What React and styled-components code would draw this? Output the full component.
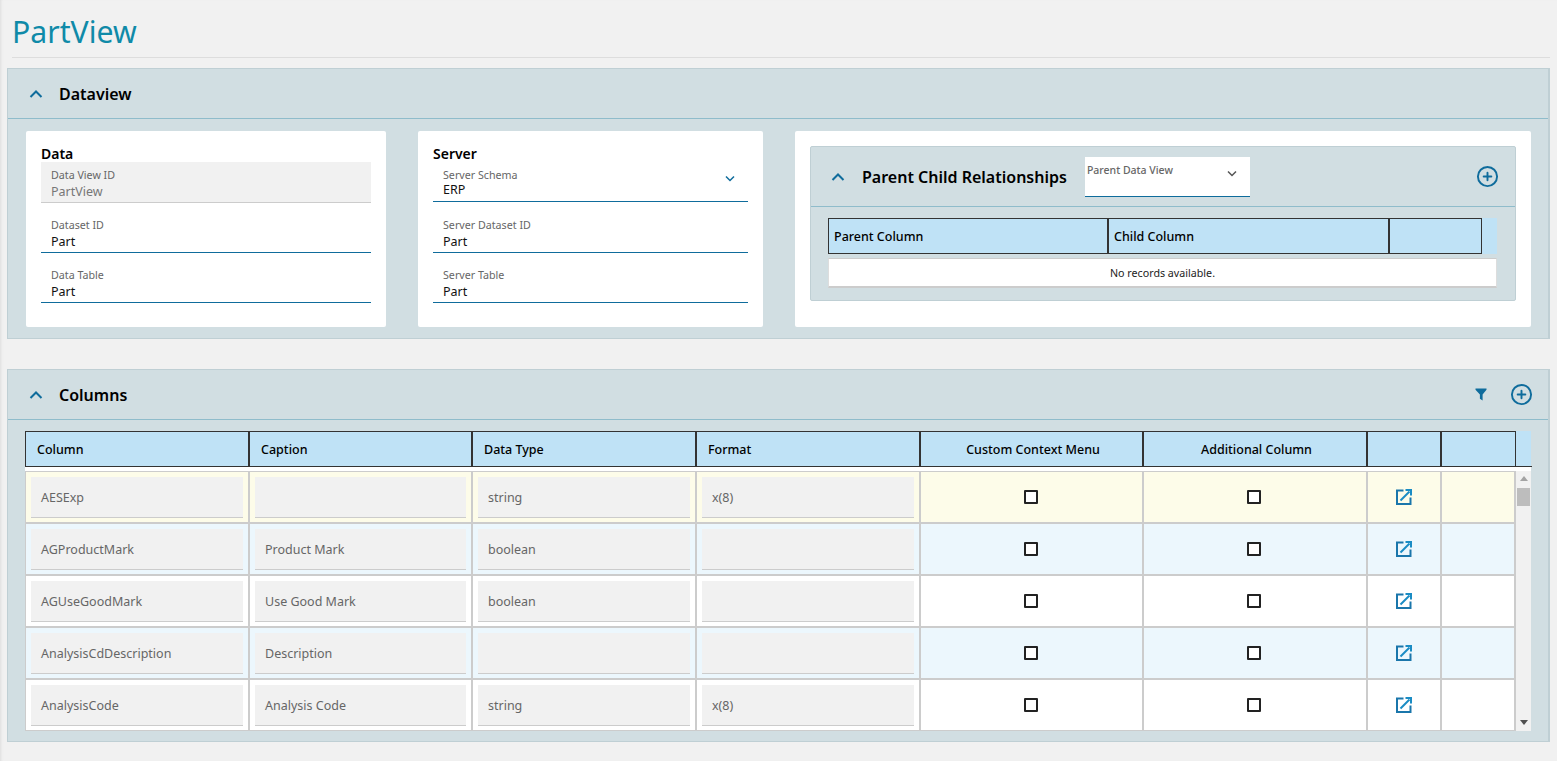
import React from 'react';
import styled, { createGlobalStyle } from 'styled-components';
import { CirclePlus } from 'lucide-react';

const GlobalStyle = createGlobalStyle`
  html, body {
    margin: 0;
    padding: 0;
    background: #f1f1f1;
    font-family: "Noto Sans", "Open Sans", sans-serif;
    color: #000;
  }
  * { box-sizing: border-box; }
`;

const headWidths = '223px 223px 224px 224px 223px 224px 74px 76px';
const rowWidths = '224px 223px 224px 224px 223px 224px 74px 74px';

const columnRows = [
  { column: 'AESExp', caption: '', type: 'string', format: 'x(8)', tone: 'selected' },
  { column: 'AGProductMark', caption: 'Product Mark', type: 'boolean', format: '', tone: 'alt' },
  { column: 'AGUseGoodMark', caption: 'Use Good Mark', type: 'boolean', format: '', tone: 'plain' },
  { column: 'AnalysisCdDescription', caption: 'Description', type: '', format: '', tone: 'alt' },
  { column: 'AnalysisCode', caption: 'Analysis Code', type: 'string', format: 'x(8)', tone: 'plain' },
];

const rowColors = { selected: '#fdfce9', alt: '#ecf7fd', plain: '#fff' };

const ChevronUp = () => (
  <svg width="14" height="10" viewBox="0 0 14 10" fill="none">
    <path d="M1.5 8 L7 2.5 L12.5 8" stroke="#0f6c9c" strokeWidth="2" />
  </svg>
);

const ChevronDown = ({ color }) => (
  <svg width="10" height="7" viewBox="0 0 10 7" fill="none">
    <path d="M1 1.5 L5 5.5 L9 1.5" stroke={color} strokeWidth="1.5" />
  </svg>
);

const FilterIcon = () => (
  <svg width="12" height="13" viewBox="0 0 12 13">
    <path d="M0.5 0.5 H11.5 V1.8 L7.6 6.5 V12.5 L4.9 10.8 V6.5 L0.5 1.8 Z" fill="#0f6c9c" />
  </svg>
);

const OpenIcon = () => (
  <svg width="16" height="16" viewBox="0 0 16 16" fill="none">
    <path d="M7.5 1.5 H1 V15 H14.5 V8.5" stroke="#1a76ab" strokeWidth="2" />
    <path d="M4.5 11.5 L13.5 2.5" stroke="#1a8cc4" strokeWidth="2" />
    <path d="M9.5 1 H15 V6.5" stroke="#1a8cc4" strokeWidth="2" />
  </svg>
);

const Page = styled.div`
  height: 761px;
  padding: 0 7px;
  overflow: hidden;
  box-shadow: inset 3px 0 3px -2px #ddd;
`;

const TitleBar = styled.div`
  margin: 0 0 10px 5px;
  height: 58px;
  padding-top: 11px;
  border-bottom: 1px solid #ddd;
`;

const Title = styled.h1`
  margin: 0;
  font-size: 30.2px;
  line-height: 42px;
  font-weight: 400;
  color: #0f8aa8;
`;

const Panel = styled.section`
  background: #d1dee2;
  border: 1px solid #bfcfd4;
  border-right-width: 2px;
  margin-bottom: ${(p) => p.$gap || 0}px;
`;

const PanelHeader = styled.header`
  display: flex;
  align-items: center;
  height: ${(p) => p.$height || 50}px;
  padding: 0 ${(p) => p.$padRight || 15}px 0 ${(p) => p.$padLeft || 21}px;
  border-bottom: 1px solid #8fbccb;
`;

const PanelTitle = styled.h2`
  margin: 0 0 0 ${(p) => p.$gap || 16}px;
  font-size: 16px;
  line-height: 20px;
  font-weight: 600;
`;

const DataviewBody = styled.div`
  display: grid;
  grid-template-columns: 360px 345px 736px;
  gap: 32px;
  padding: 12px 18px 11px;
`;

const Card = styled.div`
  background: #fff;
  border-radius: 2px;
  height: 196px;
  padding: ${(p) => (p.$wide ? '15px 15px' : '14px 15px')};
`;

const CardTitle = styled.h3`
  margin: 0;
  font-size: 14px;
  line-height: 17px;
  font-weight: 600;
`;

const FieldStack = styled.div`
  display: flex;
  flex-direction: column;
  gap: 9px;
`;

const Field = styled.div`
  position: relative;
  height: ${(p) => (p.$select ? 40 : 41)}px;
  margin-bottom: ${(p) => (p.$select ? 1 : 0)}px;
  padding: 6px 10px 0;
  background: ${(p) => (p.$readOnly ? '#f1f1f1' : '#fff')};
  border-bottom: ${(p) => (p.$readOnly ? '1px solid #ccc' : '1px solid #0f6c9c')};
`;

const FieldLabel = styled.div`
  font-size: 10.7px;
  line-height: 14px;
  color: #666;
`;

const FieldValue = styled.div`
  font-size: 12.5px;
  line-height: 17px;
  margin-top: ${(p) => (p.$tight ? -1 : 1)}px;
  color: ${(p) => (p.$readOnly ? '#777' : '#111')};
`;

const SelectArrow = styled.span`
  position: absolute;
  right: 13px;
  top: 13px;
  line-height: 0;
`;

const ParentPanel = styled.div`
  background: #d1dee2;
  border: 1px solid #bfcfd4;
  border-radius: 2px;
  height: 155px;
`;

const ParentSelect = styled.div`
  position: relative;
  width: 165px;
  height: 40px;
  margin-left: 18px;
  padding: 6px 2px;
  background: #fff;
  border-bottom: 1px solid #0f6c9c;
  font-size: 10.5px;
  line-height: 14px;
  font-weight: 500;
  color: #666;
`;

const AddButton = styled.span`
  margin-left: ${(p) => (p.$inline ? 0 : 'auto')};
  line-height: 0;
  color: #0f6c9c;
`;

const FilterButton = styled.span`
  margin-left: auto;
  margin-right: 23px;
  line-height: 0;
`;

const ParentBody = styled.div`
  padding: 11px 18px 0 17px;
`;

const ParentHead = styled.div`
  display: grid;
  grid-template-columns: 279px 281px 94px 16px;
  height: 36px;
  background: #bfe2f6;
`;

const ParentHeadCell = styled.div`
  display: flex;
  align-items: center;
  padding-left: 5px;
  font-size: 12.5px;
  font-weight: 500;
  border-top: 1px solid #333;
  border-bottom: 1px solid #333;
  border-left: ${(p) => (p.$first ? 1 : 2)}px solid #333;
  border-right: ${(p) => (p.$last ? 1 : 0)}px solid #333;
`;

const NoRecords = styled.div`
  margin-top: 4px;
  height: 30px;
  background: #fff;
  border: 1px solid #ddd;
  border-top-color: #ccc;
  border-bottom: 2px solid #ccc;
  font-size: 10.7px;
  line-height: 28px;
  text-align: center;
  color: #222;
`;

const ColumnsBody = styled.div`
  padding: 11px 17px 10px;
`;

const TableHead = styled.div`
  display: grid;
  grid-template-columns: ${headWidths} 16px;
  height: 36px;
  background: #bfe2f6;
`;

const HeadCell = styled.div`
  display: flex;
  align-items: center;
  justify-content: ${(p) => (p.$center ? 'center' : 'flex-start')};
  padding-left: ${(p) => (p.$center ? 3 : 11)}px;
  font-size: 12.5px;
  font-weight: 500;
  border-top: 1px solid #333;
  border-bottom: 1px solid #333;
  border-left: ${(p) => (p.$first ? 1 : 2)}px solid #333;
  border-right: ${(p) => (p.$last ? 1 : 0)}px solid #333;
`;

const HeadGutter = styled.div`
  border-bottom: 1px solid #333;
`;

const TableViewport = styled.div`
  display: grid;
  grid-template-columns: 1fr 16px;
  height: 264px;
  padding-top: 4px;
  background: #fff;
  overflow: hidden;
`;

const Rows = styled.div`
  border-left: 1px solid #ccc;
`;

const Row = styled.div`
  display: grid;
  grid-template-columns: ${rowWidths};
  height: 52px;
  background: ${(p) => rowColors[p.$tone]};
  border-top: 2px solid #ccc;
  &:first-child { height: 51px; border-top-width: 1px; }
  &:last-child { height: 54px; border-bottom: 2px solid #ccc; }
`;

const Cell = styled.div`
  display: flex;
  align-items: center;
  justify-content: center;
  padding: 5px 5px 4px;
  border-right: 2px solid #ccc;
`;

const CellInput = styled.div`
  width: 100%;
  height: 41px;
  padding-left: 10px;
  background: #f1f1f1;
  border-bottom: 1px solid #ccc;
  font-size: 12.5px;
  line-height: 41px;
  color: #666;
`;

const Checkbox = styled.span`
  display: block;
  width: 14px;
  height: 14px;
  margin: 0 2px 2px 0;
  background: #fff;
  border: 2px solid #222;
  border-radius: 1px;
`;

const OpenLink = styled.span`
  line-height: 0;
  margin-bottom: 2px;
`;

const Scrollbar = styled.div`
  position: relative;
  background: #f1f1f1;
`;

const ScrollUp = styled.span`
  position: absolute;
  top: 5px;
  left: 4px;
  border: 4px solid transparent;
  border-top: 0;
  border-bottom: 5px solid #a3a3a3;
`;

const ScrollThumb = styled.span`
  position: absolute;
  top: 17px;
  left: 1px;
  width: 13px;
  height: 18px;
  background: #bdbdbd;
`;

const ScrollDown = styled.span`
  position: absolute;
  bottom: 7px;
  left: 4px;
  border: 4px solid transparent;
  border-bottom: 0;
  border-top: 5px solid #505050;
`;

const App = () => (
  <Page>
    <GlobalStyle />
    <TitleBar>
      <Title>PartView</Title>
    </TitleBar>

    <Panel $gap={30}>
      <PanelHeader>
        <ChevronUp />
        <PanelTitle>Dataview</PanelTitle>
      </PanelHeader>
      <DataviewBody>
        <Card>
          <CardTitle>Data</CardTitle>
          <FieldStack>
            <Field $readOnly>
              <FieldLabel>Data View ID</FieldLabel>
              <FieldValue $readOnly>PartView</FieldValue>
            </Field>
            <Field>
              <FieldLabel>Dataset ID</FieldLabel>
              <FieldValue>Part</FieldValue>
            </Field>
            <Field>
              <FieldLabel>Data Table</FieldLabel>
              <FieldValue>Part</FieldValue>
            </Field>
          </FieldStack>
        </Card>
        <Card>
          <CardTitle>Server</CardTitle>
          <FieldStack>
            <Field $select>
              <FieldLabel>Server Schema</FieldLabel>
              <FieldValue $tight>ERP</FieldValue>
              <SelectArrow><ChevronDown color="#0f6c9c" /></SelectArrow>
            </Field>
            <Field>
              <FieldLabel>Server Dataset ID</FieldLabel>
              <FieldValue>Part</FieldValue>
            </Field>
            <Field>
              <FieldLabel>Server Table</FieldLabel>
              <FieldValue>Part</FieldValue>
            </Field>
          </FieldStack>
        </Card>
        <Card $wide>
          <ParentPanel>
            <PanelHeader $height={60} $padLeft={20} $padRight={16}>
              <ChevronUp />
              <PanelTitle $gap={17}>Parent Child Relationships</PanelTitle>
              <ParentSelect>
                Parent Data View
                <SelectArrow><ChevronDown color="#555" /></SelectArrow>
              </ParentSelect>
              <AddButton><CirclePlus size={23} strokeWidth={2} /></AddButton>
            </PanelHeader>
            <ParentBody>
              <ParentHead>
                <ParentHeadCell $first>Parent Column</ParentHeadCell>
                <ParentHeadCell>Child Column</ParentHeadCell>
                <ParentHeadCell $last />
              </ParentHead>
              <NoRecords>No records available.</NoRecords>
            </ParentBody>
          </ParentPanel>
        </Card>
      </DataviewBody>
    </Panel>

    <Panel>
      <PanelHeader>
        <ChevronUp />
        <PanelTitle>Columns</PanelTitle>
        <FilterButton><FilterIcon /></FilterButton>
        <AddButton $inline><CirclePlus size={23} strokeWidth={2} /></AddButton>
      </PanelHeader>
      <ColumnsBody>
        <TableHead>
          <HeadCell $first>Column</HeadCell>
          <HeadCell>Caption</HeadCell>
          <HeadCell>Data Type</HeadCell>
          <HeadCell>Format</HeadCell>
          <HeadCell $center>Custom Context Menu</HeadCell>
          <HeadCell $center>Additional Column</HeadCell>
          <HeadCell />
          <HeadCell $last />
          <HeadGutter />
        </TableHead>
        <TableViewport>
          <Rows>
            {columnRows.map((row) => (
              <Row key={row.column} $tone={row.tone}>
                <Cell><CellInput>{row.column}</CellInput></Cell>
                <Cell><CellInput>{row.caption}</CellInput></Cell>
                <Cell><CellInput>{row.type}</CellInput></Cell>
                <Cell><CellInput>{row.format}</CellInput></Cell>
                <Cell><Checkbox /></Cell>
                <Cell><Checkbox /></Cell>
                <Cell><OpenLink><OpenIcon /></OpenLink></Cell>
                <Cell />
              </Row>
            ))}
          </Rows>
          <Scrollbar>
            <ScrollUp />
            <ScrollThumb />
            <ScrollDown />
          </Scrollbar>
        </TableViewport>
      </ColumnsBody>
    </Panel>
  </Page>
);

export default App;
